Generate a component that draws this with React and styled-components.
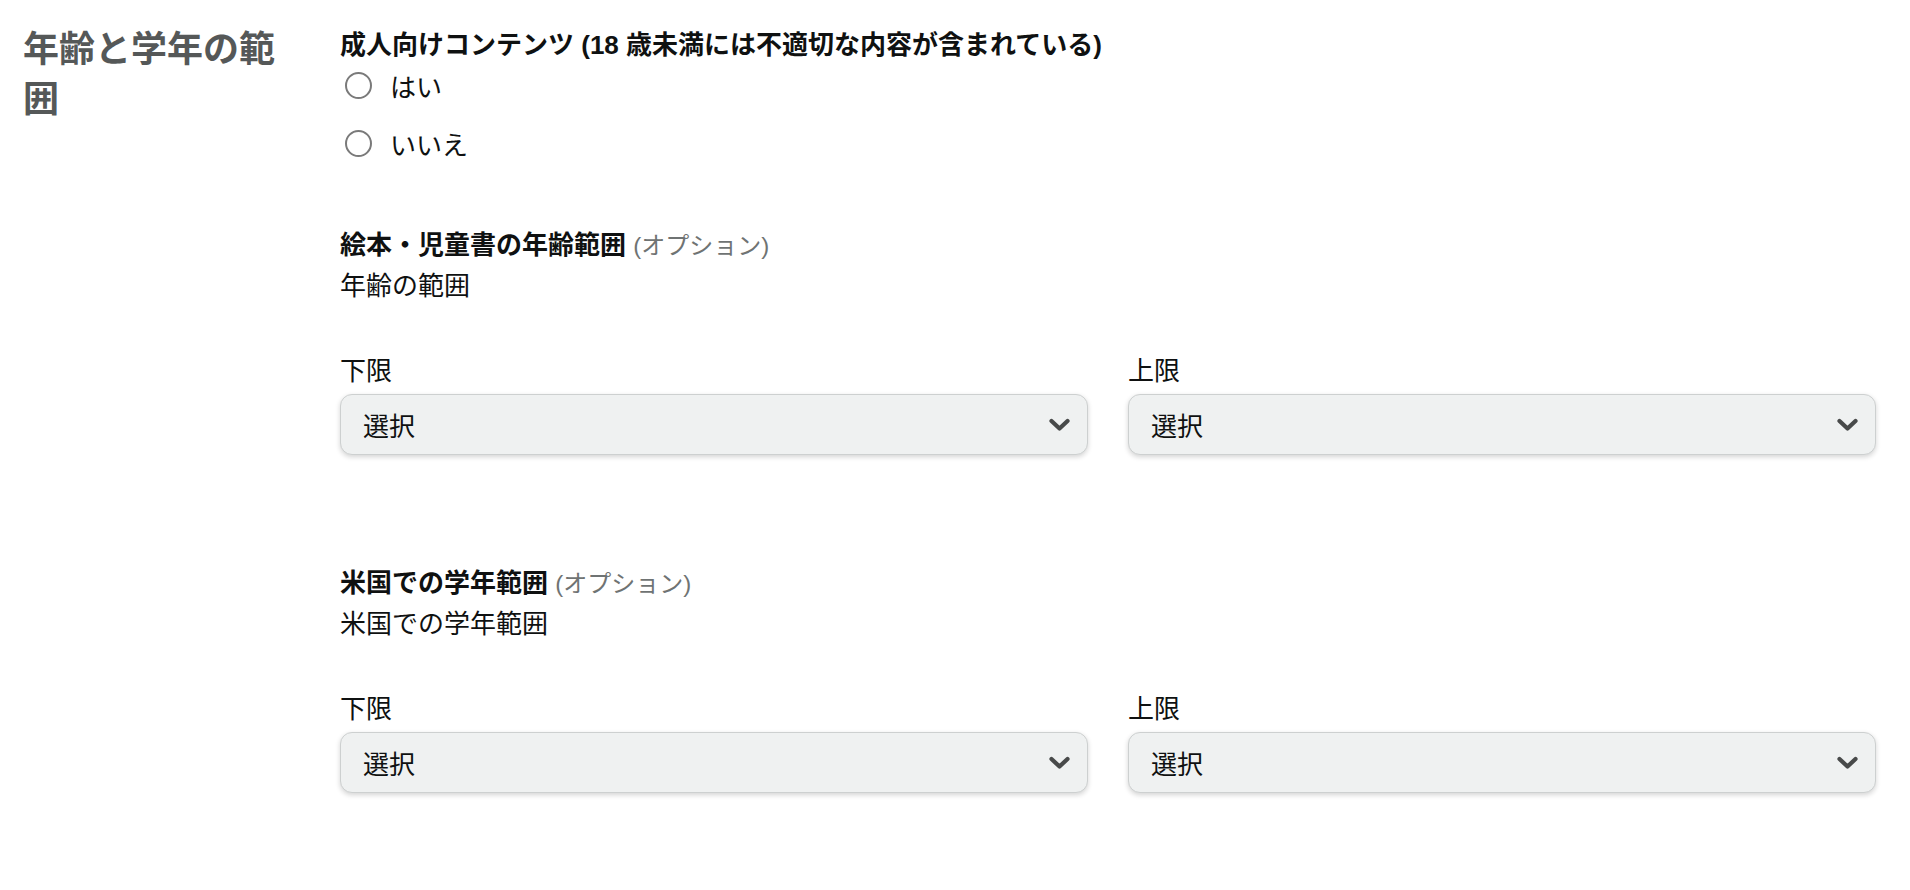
import React from "react";
import styled, { createGlobalStyle } from "styled-components";

const GlobalStyle = createGlobalStyle`
  html, body { margin: 0; padding: 0; background: #ffffff; }
  body {
    font-family: "Liberation Sans", Arial, "Noto Sans CJK JP", sans-serif;
    color: #0f1111;
  }
`;

const Page = styled.div`
  display: grid;
  grid-template-columns: 275px 1fr;
  column-gap: 42px;
  padding: 25px 34px 60px 23px;
`;

const SectionHeading = styled.h2`
  margin: 0;
  font-size: 36px;
  line-height: 50px;
  font-weight: 700;
  color: #555858;
`;

const Main = styled.div`
  display: flex;
  flex-direction: column;
`;

const Field = styled.div`
  display: flex;
  flex-direction: column;
  margin-top: ${(p) => p.$top || 0}px;
`;

const FieldTitle = styled.div`
  font-size: 26px;
  line-height: 40px;
  font-weight: 700;
  color: #0f1111;
  white-space: nowrap;
`;

const Optional = styled.span`
  font-size: 24px;
  font-weight: 400;
  color: #6f7373;
`;

const SubText = styled.div`
  font-size: 26px;
  line-height: 41px;
  color: #0f1111;
`;

const RadioGroup = styled.div`
  display: flex;
  flex-direction: column;
  gap: 18px;
`;

const RadioRow = styled.label`
  display: flex;
  align-items: center;
  gap: 18px;
  height: 40px;
  padding-left: 5px;
  font-size: 26px;
  color: #0f1111;
  cursor: pointer;
`;

const RadioCircle = styled.span`
  width: 23px;
  height: 23px;
  border-radius: 50%;
  border: 2px solid #7a7a7a;
  background: #fff;
  flex: none;
`;

const RangeGrid = styled.div`
  display: grid;
  grid-template-columns: 1fr 1fr;
  column-gap: 40px;
  margin-top: 44px;
`;

const RangeCol = styled.div`
  display: flex;
  flex-direction: column;
  gap: 3px;
`;

const SelectLabel = styled.div`
  font-size: 26px;
  line-height: 40px;
  color: #0f1111;
`;

const SelectBox = styled.div`
  box-sizing: border-box;
  height: 61px;
  display: flex;
  align-items: center;
  justify-content: space-between;
  padding: 0 17px 0 22px;
  background: #eff1f1;
  border: 1px solid #cdd0d0;
  border-radius: 12px;
  box-shadow: 0 2px 5px rgba(15, 17, 17, 0.18);
  font-size: 26px;
  color: #0f1111;
  cursor: pointer;
`;

const Chevron = () => (
  <svg width="21" height="14" viewBox="0 0 21 14" aria-hidden="true">
    <polyline
      points="2.5,3 10.5,10.5 18.5,3"
      fill="none"
      stroke="#484a4a"
      strokeWidth="4.2"
      strokeLinecap="round"
      strokeLinejoin="round"
    />
  </svg>
);

const Select = ({ value }) => (
  <SelectBox role="button">
    <span>{value}</span>
    <Chevron />
  </SelectBox>
);

const Range = () => (
  <RangeGrid>
    <RangeCol>
      <SelectLabel>下限</SelectLabel>
      <Select value="選択" />
    </RangeCol>
    <RangeCol>
      <SelectLabel>上限</SelectLabel>
      <Select value="選択" />
    </RangeCol>
  </RangeGrid>
);

export default function App() {
  return (
    <>
      <GlobalStyle />
      <Page>
        <SectionHeading>年齢と学年の範囲</SectionHeading>
        <Main>
          <Field>
            <FieldTitle>成人向けコンテンツ (18 歳未満には不適切な内容が含まれている)</FieldTitle>
            <RadioGroup>
              <RadioRow>
                <RadioCircle />
                はい
              </RadioRow>
              <RadioRow>
                <RadioCircle />
                いいえ
              </RadioRow>
            </RadioGroup>
          </Field>

          <Field $top={62}>
            <FieldTitle>
              絵本・児童書の年齢範囲 <Optional>(オプション)</Optional>
            </FieldTitle>
            <SubText>年齢の範囲</SubText>
            <Range />
          </Field>

          <Field $top={108}>
            <FieldTitle>
              米国での学年範囲 <Optional>(オプション)</Optional>
            </FieldTitle>
            <SubText>米国での学年範囲</SubText>
            <Range />
          </Field>
        </Main>
      </Page>
    </>
  );
}
